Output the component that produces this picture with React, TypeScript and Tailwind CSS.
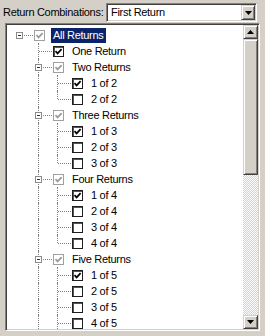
import React from 'react';

type CheckState = 'on' | 'off' | 'gray';

interface TreeNode {
  label: string;
  state: CheckState;
  selected?: boolean;
  children?: TreeNode[];
}

interface FlatRow {
  node: TreeNode;
  guides: boolean[]; // for each ancestor level: draw the vertical line through?
  hasNext: boolean;
  isRoot: boolean;
}

const leaves = (n: number): TreeNode[] =>
  Array.from({ length: n }, (_, i) => ({ label: `${i + 1} of ${n}`, state: i === 0 ? 'on' : 'off' }));

const data: TreeNode = {
  label: 'All Returns',
  state: 'gray',
  selected: true,
  children: [
    { label: 'One Return', state: 'on' },
    { label: 'Two Returns', state: 'gray', children: leaves(2) },
    { label: 'Three Returns', state: 'gray', children: leaves(3) },
    { label: 'Four Returns', state: 'gray', children: leaves(4) },
    { label: 'Five Returns', state: 'gray', children: leaves(5) },
    { label: 'Six Returns', state: 'gray', children: leaves(6) },
  ],
};

function flatten(node: TreeNode, guides: boolean[], hasNext: boolean, isRoot: boolean, out: FlatRow[]) {
  out.push({ node, guides, hasNext, isRoot });
  const kids = node.children ?? [];
  kids.forEach((child, i) => {
    flatten(child, [...guides, isRoot ? false : hasNext], i < kids.length - 1, false, out);
  });
  return out;
}

// only the rows that fit in the visible part of the tree
const rows = flatten(data, [], false, true, []).slice(0, 19);

function CheckBox({ state }: { state: CheckState }) {
  const gray = state === 'gray';
  return (
    <span
      className={`flex h-[11px] w-[11px] shrink-0 items-center justify-center bg-white border ${
        gray ? 'border-[#a0a0a0]' : 'border-[#1e1e1e] shadow-[inset_1px_1px_0_#555]'
      }`}
    >
      {state !== 'off' && (
        <svg width="9" height="9" viewBox="0 0 9 9" aria-hidden>
          <path
            d="M1.5 4.2 L3.6 6.4 L7.6 2.2"
            fill="none"
            stroke={gray ? '#9a9a9a' : '#000'}
            strokeWidth={1.7}
          />
        </svg>
      )}
    </span>
  );
}

function TreeRow({ row }: { row: FlatRow }) {
  const { node } = row;
  return (
    <div className="flex h-[16px] shrink-0 items-center">
      {row.guides.map((g, i) => (
        <div key={i} className="relative h-full w-[19px] shrink-0">
          {g && <span className="absolute left-[8px] top-0 h-full border-l border-dotted border-[#808080]" />}
        </div>
      ))}
      <div className="relative h-full w-[23px] shrink-0">
        {!row.isRoot && (
          <span
            className={`absolute left-[8px] top-0 border-l border-dotted border-[#808080] ${
              row.hasNext ? 'h-full' : 'h-[8px]'
            }`}
          />
        )}
        <span className="absolute left-[9px] right-[1px] top-[8px] border-t border-dotted border-[#808080]" />
        {node.children && (
          <span className="absolute left-[5px] top-[5px] flex h-[7px] w-[7px] items-center justify-center border border-[#8a8a8a] bg-white">
            <span className="h-px w-[3px] bg-[#333]" />
          </span>
        )}
      </div>
      <CheckBox state={node.state} />
      <span
        className={`ml-[6px] whitespace-nowrap px-[2px] leading-[15px] ${
          node.selected ? 'bg-[#0a246a] text-white' : 'text-black'
        }`}
      >
        {node.label}
      </span>
    </div>
  );
}

function Arrow({ dir }: { dir: 'up' | 'down' }) {
  return (
    <svg width="7" height="4" viewBox="0 0 7 4" aria-hidden>
      <path d={dir === 'down' ? 'M0 0 H7 L3.5 4 Z' : 'M0 4 H7 L3.5 0 Z'} fill="#000" />
    </svg>
  );
}

const raised =
  'bg-[#d4d0c8] border border-t-[#d4d0c8] border-l-[#d4d0c8] border-r-[#404040] border-b-[#404040] shadow-[inset_1px_1px_0_#fff,inset_-1px_-1px_0_#808080]';

export default function App() {
  return (
    <div className="h-[336px] w-[265px] overflow-hidden bg-[#d4d0c8] font-['Liberation_Sans',Arial,sans-serif] text-[11px] tracking-[-0.3px] text-black">
      <div className="flex items-center pt-[3px]">
        <span className="pl-[3px]">Return Combinations:</span>
        <div className="ml-auto mr-[8px] flex h-[19px] w-[151px] items-center border border-t-[#808080] border-l-[#808080] border-r-white border-b-white bg-white shadow-[inset_1px_1px_0_#404040,inset_-1px_-1px_0_#d4d0c8]">
          <span className="flex-1 pl-[4px]">First Return</span>
          <span className={`mr-[1px] flex h-[15px] w-[14px] items-center justify-center ${raised}`}>
            <Arrow dir="down" />
          </span>
        </div>
      </div>

      <div className="ml-[5px] mt-[1px] flex h-[308px] w-[255px] border border-t-[#808080] border-l-[#808080] border-r-white border-b-white bg-white shadow-[inset_1px_1px_0_#404040,inset_-1px_-1px_0_#d4d0c8]">
        <div className="flex min-w-0 flex-1 flex-col overflow-hidden pl-[5px] pt-[3px]">
          {rows.map((r, i) => (
            <TreeRow key={i} row={r} />
          ))}
        </div>
        <div className="my-[1px] mr-[1px] flex w-[15px] shrink-0 flex-col">
          <span className={`flex h-[14px] shrink-0 items-center justify-center ${raised}`}>
            <Arrow dir="up" />
          </span>
          <span className={`h-[136px] shrink-0 ${raised}`} />
          <span className="flex-1 bg-[image:repeating-conic-gradient(#d4d0c8_0%_25%,#ffffff_0%_50%)] bg-[length:2px_2px]" />
          <span className={`flex h-[14px] shrink-0 items-center justify-center ${raised}`}>
            <Arrow dir="down" />
          </span>
        </div>
      </div>
    </div>
  );
}
